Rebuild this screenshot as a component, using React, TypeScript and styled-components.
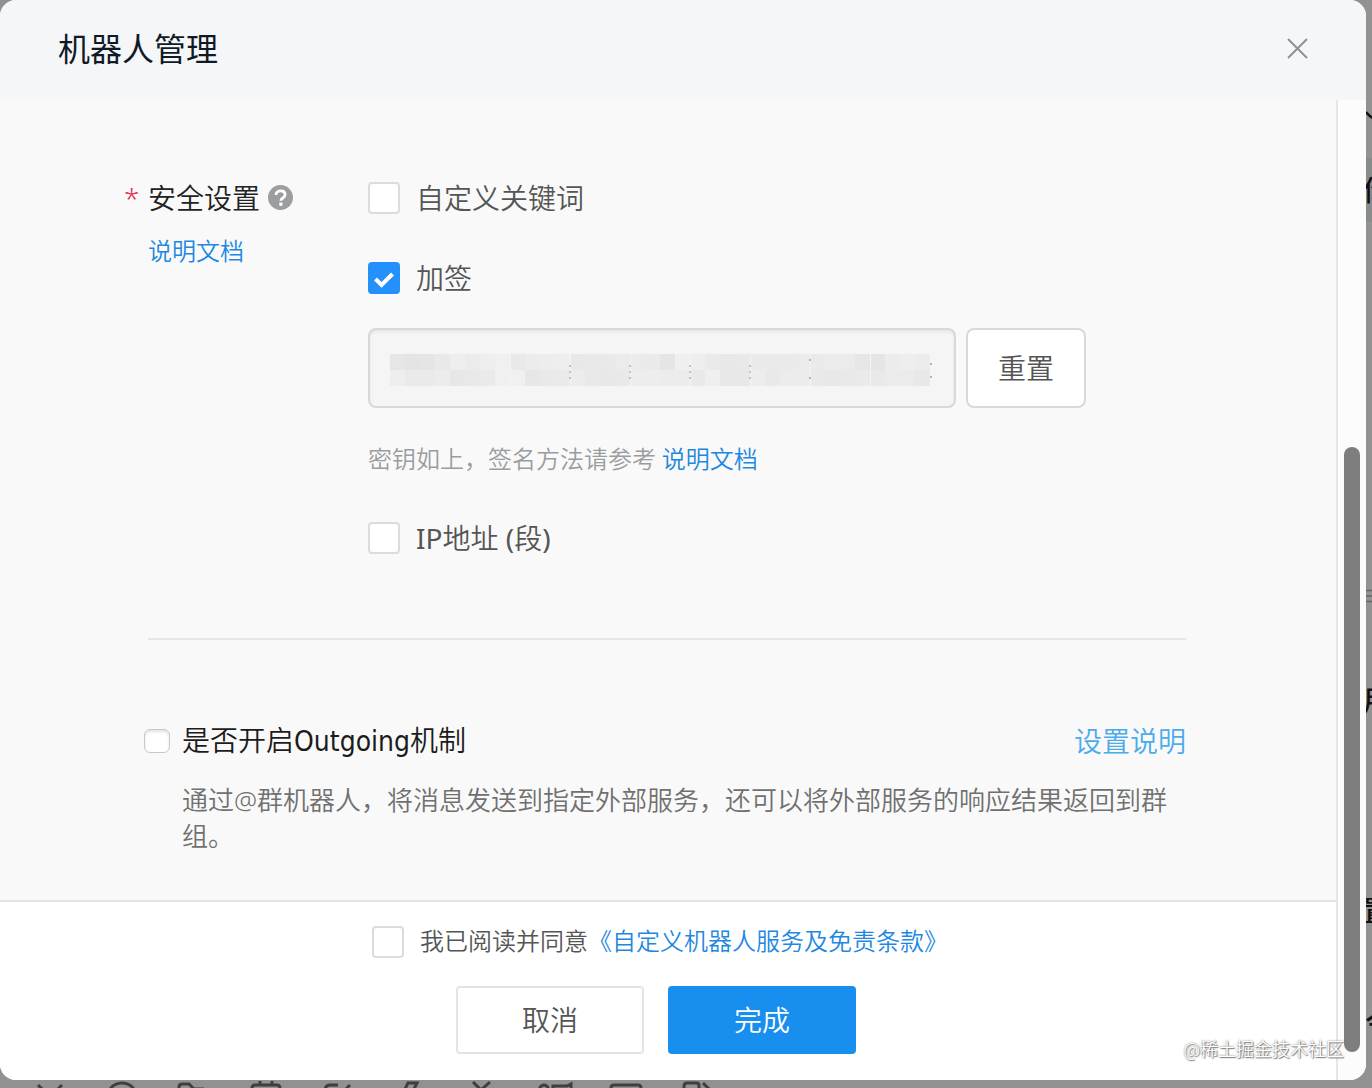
import React, { useId, useState } from "react";
import styled, { createGlobalStyle, css } from "styled-components";

const smallFont = `Roboto, "Noto Sans CJK SC", sans-serif`;

const GlobalStyle = createGlobalStyle`
  * { box-sizing: border-box; }
  body {
    margin: 0;
    background: #919191;
    font-family: "Noto Sans", "Noto Sans CJK SC", sans-serif;
    font-weight: 350;
    color: #222;
  }
  button, input { font: inherit; }
`;

const Desktop = styled.div`
  min-height: 100vh;
  display: grid;
  grid-template-columns: minmax(0, 1fr) 6px;
  grid-template-rows: 1fr 8px;
  overflow: hidden;
`;

const Dialog = styled.section`
  position: relative;
  display: flex;
  flex-direction: column;
  border-radius: 16px;
  overflow: hidden;
  background: #f9f9f9;
`;

const Header = styled.header`
  display: flex;
  align-items: center;
  justify-content: space-between;
  height: 100px;
  padding: 0 56px 2px 58px;
  background: #f4f6f8;
`;

const Title = styled.h1`
  margin: 0;
  font-size: 32px;
  line-height: 48px;
  font-weight: 400;
  color: #101a26;
`;

const CloseButton = styled.button`
  display: flex;
  padding: 0;
  border: 0;
  background: none;
  color: #8f9193;
`;

const Viewport = styled.div`
  flex: 1;
  display: flex;
`;

const Content = styled.main`
  flex: 1;
  min-width: 0;
  display: flex;
  flex-direction: column;
`;

const ScrollTrack = styled.div`
  width: 30px;
  display: flex;
  flex-direction: column;
  justify-content: flex-end;
  padding: 0 6px 28px;
  border-left: 2px solid #e6e6e6;
  background: #fcfcfc;
`;

const ScrollThumb = styled.div`
  height: 63.5%;
  width: 16px;
  border-radius: 8px;
  background: #7e7e7e;
`;

const Form = styled.form`
  flex: 1;
  padding: 78px 150px 44px 124px;
`;

const Security = styled.div`
  display: grid;
  grid-template-columns: 244px minmax(0, 1fr);
  padding-bottom: 80px;
`;

const LabelColumn = styled.div`
  display: grid;
  grid-template-columns: 24px 1fr;
  align-content: start;
  row-gap: 16px;
`;

const Required = styled.span`
  font-size: 28px;
  line-height: 40px;
  color: #e0304e;
`;

const FieldLabel = styled.div`
  display: flex;
  align-items: center;
  gap: 8px;
  font-size: 28px;
  line-height: 40px;
`;

const Link = styled.a<{ $large?: boolean }>`
  font-family: ${(p) => (p.$large ? "inherit" : smallFont)};
  font-size: ${(p) => (p.$large ? 28 : 24)}px;
  line-height: ${(p) => (p.$large ? 40 : 36)}px;
  color: ${(p) => (p.$large ? "#4cabea" : "#1e88e0")};
  text-decoration: none;
`;

const Options = styled.div`
  display: flex;
  flex-direction: column;
`;

const OptionRow = styled.div<{ $top?: number }>`
  display: flex;
  align-items: center;
  gap: 16px;
  height: 40px;
  margin-top: ${(p) => p.$top ?? 0}px;
`;

const OptionLabel = styled.label<{ $small?: boolean }>`
  font-family: ${(p) => (p.$small ? smallFont : "inherit")};
  font-size: ${(p) => (p.$small ? 24 : 28)}px;
  line-height: ${(p) => (p.$small ? 32 : 40)}px;
  color: #555;
`;

const Latin = styled.span<{ $compact?: boolean }>`
  font-family: ${(p) => (p.$compact ? `"DejaVu Sans Condensed", Roboto` : `"Noto Sans"`)}, sans-serif;
  font-weight: 400;
`;

const BoxWrap = styled.span`
  display: grid;
  flex: none;
  > * { grid-area: 1 / 1; }
  svg { pointer-events: none; }
`;

const Box = styled.input<{ $mini?: boolean }>`
  appearance: none;
  margin: 0;
  width: 32px;
  height: 32px;
  border: 2px solid #dcdcdc;
  border-radius: 4px;
  background: #fff;
  &:checked {
    border-color: #2490fc;
    background: #2490fc;
  }
  ${(p) =>
    p.$mini &&
    css`
      width: 26px;
      height: 24px;
      border: 1px solid #c8c8c8;
      border-radius: 6px;
      box-shadow: inset 0 2px 3px #e2e2e2;
    `}
`;

const SecretRow = styled.div`
  display: flex;
  gap: 10px;
  margin-top: 30px;
`;

const SecretField = styled.div`
  display: grid;
  width: 588px;
  align-items: center;
  > * { grid-area: 1 / 1; }
  svg { margin: 4px 0 0 22px; pointer-events: none; }
`;

const SecretInput = styled.input`
  width: 100%;
  height: 80px;
  padding: 0 20px;
  border: 2px solid #d8d8d8;
  border-radius: 8px;
  background: #f5f5f5;
  box-shadow: inset 0 2px 3px #e6e6e6;
`;

const Button = styled.button<{ $kind?: "primary" | "tall" }>`
  width: ${(p) => (p.$kind === "tall" ? 120 : 188)}px;
  height: ${(p) => (p.$kind === "tall" ? 80 : 68)}px;
  padding: 0;
  border: 2px solid ${(p) => (p.$kind === "tall" ? "#d9d9d9" : "#e4e4e4")};
  border-radius: ${(p) => (p.$kind === "tall" ? 8 : 4)}px;
  background: #fff;
  color: #555;
  font-size: 28px;
  line-height: 40px;
  ${(p) =>
    p.$kind === "primary" &&
    css`
      border-color: #188eee;
      background: #188eee;
      color: #fff;
    `}
`;

const Hint = styled.p`
  margin: 34px 0 0;
  font-family: ${smallFont};
  font-size: 24px;
  line-height: 36px;
  color: #999da0;
`;

const Divider = styled.hr`
  margin: 0 0 0 24px;
  border: 0;
  border-top: 2px solid #e6e6e6;
`;

const Outgoing = styled.div`
  display: grid;
  grid-template-columns: 26px minmax(0, 1fr) auto;
  align-items: center;
  column-gap: 12px;
  row-gap: 20px;
  padding: 80px 0 0 20px;
`;

const OutgoingLabel = styled.label`
  font-size: 28px;
  line-height: 40px;
  color: #1c1c1c;
`;

const Description = styled.p`
  grid-column: 2 / 4;
  margin: 0;
  font-size: 26px;
  line-height: 36px;
  color: #707070;
`;

const Footer = styled.footer`
  display: flex;
  flex-direction: column;
  align-items: center;
  gap: 28px;
  padding: 24px 24px 26px 0;
  border-top: 2px solid #e4e4e4;
  background: #fff;
`;

const Agreement = styled.div`
  display: flex;
  align-items: center;
  gap: 16px;
  height: 32px;
  padding-left: 8px;
`;

const AgreementText = styled.div`
  display: flex;
  align-items: center;
`;

const Actions = styled.div`
  display: flex;
  gap: 24px;
`;

const Watermark = styled.span`
  position: absolute;
  right: 22px;
  bottom: 16px;
  font-family: ${smallFont};
  font-size: 18px;
  line-height: 28px;
  color: #fff;
  text-shadow: 0 0 2px #666, 1px 1px 1px #888;
`;

const SideStrip = styled.div`
  position: relative;
  overflow: hidden;
  background: linear-gradient(#929292 158px, #888b8b 158px, #888b8b 222px, #929292 222px);
  svg { display: block; }
`;

const SideText = styled.span<{ $top: number; $left: number }>`
  position: absolute;
  top: ${(p) => p.$top}px;
  left: ${(p) => p.$left}px;
  font-size: 28px;
  line-height: 40px;
  font-weight: 500;
  color: #111;
  white-space: nowrap;
`;

const BottomStrip = styled.div`
  grid-column: 1 / 3;
  overflow: hidden;
  svg { display: block; }
`;

const shades = [
  [0xe6, 0xe4, 0xe5, 0xe9, 0xee, 0xeb, 0xee, 0xf0, 0xe9, 0xec, 0xed, 0xee, 0xe8, 0xe9, 0xe9, 0xeb, 0xeb, 0xea, 0xe5, 0xef, 0xee, 0xea, 0xe8, 0xe9, 0xea, 0xea, 0xea, 0xeb, 0xea, 0xec, 0xeb, 0xe6, 0xe5, 0xec, 0xee, 0xec],
  [0xee, 0xea, 0xea, 0xec, 0xe7, 0xe9, 0xea, 0xf0, 0xf0, 0xe7, 0xe9, 0xea, 0xec, 0xe9, 0xe8, 0xe9, 0xed, 0xed, 0xec, 0xec, 0xe9, 0xef, 0xe8, 0xe8, 0xed, 0xe9, 0xec, 0xec, 0xe9, 0xe8, 0xe9, 0xea, 0xe9, 0xeb, 0xeb, 0xe8],
];

const Mosaic = () => (
  <svg width="546" height="32" aria-hidden="true">
    {shades.map((row, y) =>
      row.map((v, x) => (
        <rect key={`${x}-${y}`} x={x * 15} y={y * 16} width="15" height="16" fill={`rgb(${v},${v},${v})`} />
      ))
    )}
    {[120, 180, 240, 300, 360, 420, 480].map((x) => (
      <rect key={x} x={x} y="0" width="1" height="32" fill="#f3f3f3" />
    ))}
    {[180, 240, 300, 360].map((x) => (
      <path key={x} d={`M${x} 11v14`} stroke="#c4c4c4" strokeWidth="2" strokeDasharray="2 4" />
    ))}
    <path d="M420 5v2M420 23v2M541 9v2M541 22v2" stroke="#b4b4b4" strokeWidth="2" />
  </svg>
);

function Checkbox({ id, initial = false, mini = false }: { id: string; initial?: boolean; mini?: boolean }) {
  const [on, setOn] = useState(initial);
  return (
    <BoxWrap>
      <Box id={id} type="checkbox" $mini={mini} checked={on} onChange={(e) => setOn(e.target.checked)} />
      {on && !mini && (
        <svg width="32" height="32" fill="none" stroke="#fff" strokeWidth="4">
          <path d="M7.5 17l6 6L24.5 12" />
        </svg>
      )}
    </BoxWrap>
  );
}

function Option({ children, initial, top }: { children: React.ReactNode; initial?: boolean; top?: number }) {
  const id = useId();
  return (
    <OptionRow $top={top}>
      <Checkbox id={id} initial={initial} />
      <OptionLabel htmlFor={id}>{children}</OptionLabel>
    </OptionRow>
  );
}

const HelpIcon = () => (
  <svg width="26" height="26" viewBox="0 0 26 26" fill="none" aria-hidden="true">
    <circle cx="12.5" cy="12.5" r="12.5" fill="#9b9da0" />
    <path d="M8 10c0-2.6 1.9-4.2 4.6-4.2s4.5 1.6 4.5 3.9c0 3.3-4.2 3.2-4.2 6" stroke="#fff" strokeWidth="2.8" />
    <rect x="11.3" y="17.6" width="3.2" height="3.2" fill="#fff" />
  </svg>
);

const ToolbarIcons = () => (
  <svg width="760" height="8" fill="none" stroke="#3f3f3f" strokeWidth="3" aria-hidden="true">
    <path d="M38 5l6 6M62 5l-6 6" />
    <path d="M109 11c3-6 8-8 13-8s10 2 13 8" />
    <path d="M179 11V7q0-3 3-3h7l5 5h10" />
    <path d="M252 11V8q0-3 3-3h22q3 0 3 3v3M260 1v5M272 1v5" />
    <path d="M325 11q0-6 5-6h8M350 5l-6 6" />
    <path d="M404 11l4-8h9l-4 8" />
    <path d="M473 2l8 8 9-8" />
    <path d="M539 11q1-6 5-6t5 6M553 11V6h14l4-2v7" />
    <path d="M611 11V8q0-3 3-3h24q3 0 3 3v3" />
    <path d="M684 11V6q0-3 3-3h10q2 0 2 3v5M703 3l8 8" />
  </svg>
);

const SideMarks = () => (
  <svg width="6" height="620" fill="none" aria-hidden="true">
    <path d="M0 112q3 4 7 6" stroke="#111" strokeWidth="2.5" />
    <path d="M0 590.5h6M0 596h6M0 601.5h6" stroke="#666" strokeWidth="1.5" />
  </svg>
);

export default function App() {
  return (
    <>
      <GlobalStyle />
      <Desktop>
        <Dialog role="dialog" aria-labelledby="dialog-title">
          <Header>
            <Title id="dialog-title">机器人管理</Title>
            <CloseButton type="button" aria-label="关闭">
              <svg width="24" height="24" fill="none" stroke="currentColor" strokeWidth="2">
                <path d="M2 2l19 19M21 2L2 21" />
              </svg>
            </CloseButton>
          </Header>
          <Viewport>
            <Content>
              <Form id="robot-form" onSubmit={(e) => e.preventDefault()}>
                <Security>
                  <LabelColumn>
                    <Required>*</Required>
                    <FieldLabel>
                      安全设置
                      <HelpIcon />
                    </FieldLabel>
                    <span />
                    <Link href="#doc">说明文档</Link>
                  </LabelColumn>
                  <Options>
                    <Option>自定义关键词</Option>
                    <Option initial top={40}>加签</Option>
                    <SecretRow>
                      <SecretField>
                        <SecretInput aria-label="密钥" readOnly />
                        <Mosaic />
                      </SecretField>
                      <Button type="button" $kind="tall">重置</Button>
                    </SecretRow>
                    <Hint>
                      密钥如上，签名方法请参考 <Link href="#sign">说明文档</Link>
                    </Hint>
                    <Option top={40}>
                      <Latin>IP</Latin>地址<Latin> (</Latin>段<Latin>)</Latin>
                    </Option>
                  </Options>
                </Security>
                <Divider />
                <Outgoing>
                  <Checkbox id="outgoing" mini />
                  <OutgoingLabel htmlFor="outgoing">是否开启<Latin $compact>Outgoing</Latin>机制</OutgoingLabel>
                  <Link href="#outgoing-doc" $large>设置说明</Link>
                  <Description>
                    通过@群机器人，将消息发送到指定外部服务，还可以将外部服务的响应结果返回到群组。
                  </Description>
                </Outgoing>
              </Form>
              <Footer>
                <Agreement>
                  <Checkbox id="agree" />
                  <AgreementText>
                    <OptionLabel htmlFor="agree" $small>我已阅读并同意</OptionLabel>
                    <Link href="#terms">《自定义机器人服务及免责条款》</Link>
                  </AgreementText>
                </Agreement>
                <Actions>
                  <Button type="button">取消</Button>
                  <Button type="submit" form="robot-form" $kind="primary">完成</Button>
                </Actions>
              </Footer>
            </Content>
            <ScrollTrack>
              <ScrollThumb />
            </ScrollTrack>
          </Viewport>
          <Watermark>@稀土掘金技术社区</Watermark>
        </Dialog>
        <SideStrip aria-hidden="true">
          <SideMarks />
          <SideText $top={170} $left={-3}>你</SideText>
          <SideText $top={680} $left={-3}>用</SideText>
          <SideText $top={890} $left={-3}>置</SideText>
          <SideText $top={1002} $left={-1}>今</SideText>
        </SideStrip>
        <BottomStrip>
          <ToolbarIcons />
        </BottomStrip>
      </Desktop>
    </>
  );
}
